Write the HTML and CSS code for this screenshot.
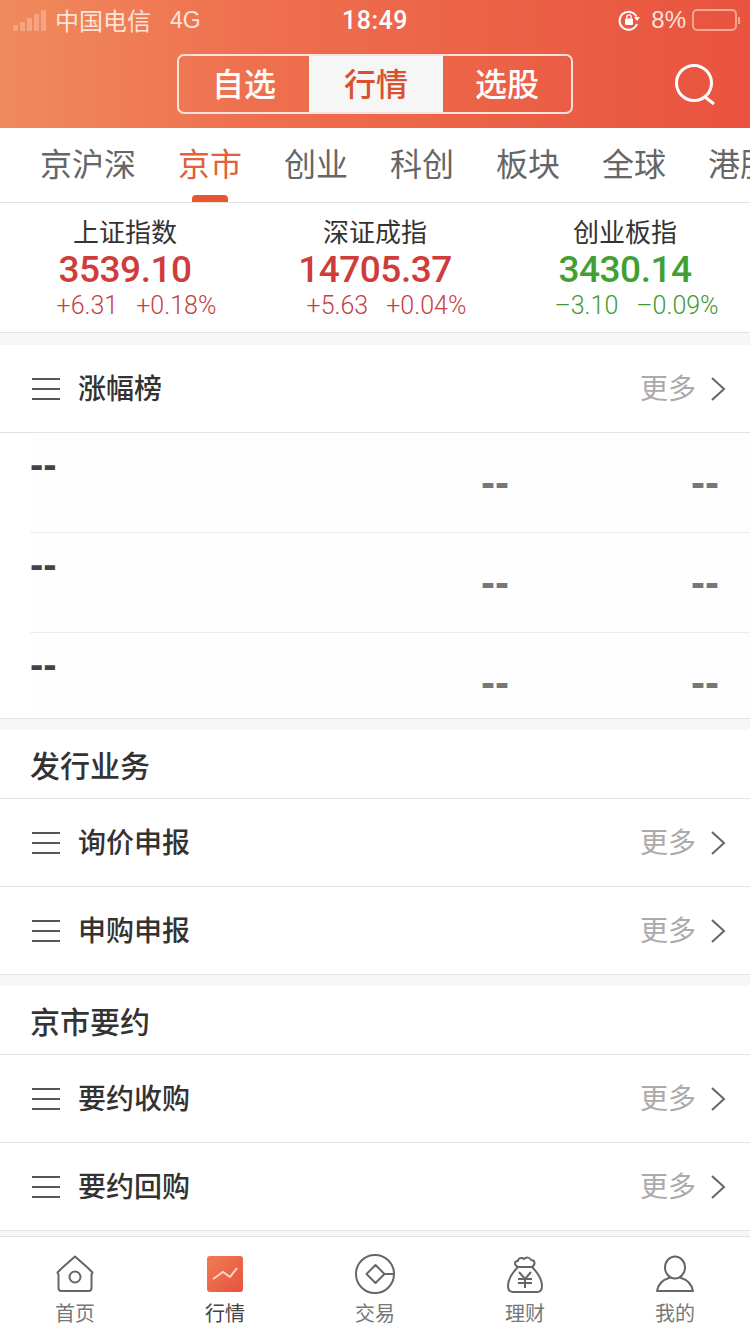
FILE: index.html
```html
<!DOCTYPE html>
<html lang="zh-CN">
<head>
  <meta charset="UTF-8">
  <meta name="viewport" content="width=device-width, initial-scale=1.0">
  <title>行情</title>
  <link rel="stylesheet" href="styles.css">
</head>
<body>
  <svg class="defs" width="0" height="0">
    <symbol id="menu" viewBox="0 0 30 24">
      <path d="M1 2h28M1 12h28M1 22h28" fill="none" stroke="#555" stroke-width="2"/>
    </symbol>
    <symbol id="arrow" viewBox="0 0 16 24">
      <path d="M2 1l12 11L2 23" fill="none" stroke="#666" stroke-width="2"/>
    </symbol>
  </svg>

  <header class="top">
    <div class="status">
      <div class="status-left">
        <span class="signal"><i></i><i></i><i></i><i></i><i></i></span>
        <span class="carrier">中国电信</span>
        <span class="net">4G</span>
      </div>
      <div class="clock">18:49</div>
      <div class="status-right">
        <svg class="lock" width="22" height="22" viewBox="0 0 22 22">
          <path d="M18.5 7.5A9 9 0 1 0 19 15" fill="none" stroke="#fff" stroke-width="2"/>
          <path d="M16 8h6l-3 4z" fill="#fff"/>
          <rect x="7" y="9.5" width="8" height="6.5" rx="1" fill="#fff"/>
          <path d="M8.800 9.500V8a2.200 2.200 0 0 1 4.400 0v1.500" fill="none" stroke="#fff" stroke-width="1.300"/>
        </svg>
        <span class="pct">8%</span>
        <span class="battery"></span>
        <span class="battery-tip"></span>
      </div>
    </div>
    <div class="nav">
      <div class="seg">
        <div class="seg-item">自选</div>
        <div class="seg-item active">行情</div>
        <div class="seg-item">选股</div>
      </div>
      <svg class="search" width="46" height="46" viewBox="0 0 46 46">
        <circle cx="22" cy="22" r="17.500" fill="none" stroke="#fff" stroke-width="3"/>
        <path d="M33 36l9 7" fill="none" stroke="#fff" stroke-width="3"/>
      </svg>
    </div>
  </header>

  <nav class="tabs">
    <span class="tab">京沪深</span>
    <span class="tab active">京市</span>
    <span class="tab">创业</span>
    <span class="tab">科创</span>
    <span class="tab">板块</span>
    <span class="tab">全球</span>
    <span class="tab">港股</span>
  </nav>

  <section class="indices">
    <div class="index up">
      <div class="index-name">上证指数</div>
      <div class="index-value">3539.10</div>
      <div class="index-change"><span>+6.31</span><span>+0.18%</span></div>
    </div>
    <div class="index up">
      <div class="index-name">深证成指</div>
      <div class="index-value">14705.37</div>
      <div class="index-change"><span>+5.63</span><span>+0.04%</span></div>
    </div>
    <div class="index down">
      <div class="index-name">创业板指</div>
      <div class="index-value">3430.14</div>
      <div class="index-change"><span>–3.10</span><span>–0.09%</span></div>
    </div>
  </section>

  <main class="content">
    <section class="block first">
      <div class="list-head tall">
        <svg class="menu" width="30" height="24"><use href="#menu"/></svg>
        <span class="list-title">涨幅榜</span>
        <span class="more">更多</span>
        <svg class="arrow" width="16" height="24"><use href="#arrow"/></svg>
      </div>
      <div class="stock"><span class="stock-name">--</span><span class="stock-num">--</span><span class="stock-num last">--</span></div>
      <div class="stock"><span class="stock-name">--</span><span class="stock-num">--</span><span class="stock-num last">--</span></div>
      <div class="stock end"><span class="stock-name">--</span><span class="stock-num">--</span><span class="stock-num last">--</span></div>
    </section>

    <section class="block">
      <h2 class="block-title">发行业务</h2>
      <div class="list-head">
        <svg class="menu" width="30" height="24"><use href="#menu"/></svg>
        <span class="list-title">询价申报</span>
        <span class="more">更多</span>
        <svg class="arrow" width="16" height="24"><use href="#arrow"/></svg>
      </div>
      <div class="list-head">
        <svg class="menu" width="30" height="24"><use href="#menu"/></svg>
        <span class="list-title">申购申报</span>
        <span class="more">更多</span>
        <svg class="arrow" width="16" height="24"><use href="#arrow"/></svg>
      </div>
    </section>

    <section class="block">
      <h2 class="block-title">京市要约</h2>
      <div class="list-head">
        <svg class="menu" width="30" height="24"><use href="#menu"/></svg>
        <span class="list-title">要约收购</span>
        <span class="more">更多</span>
        <svg class="arrow" width="16" height="24"><use href="#arrow"/></svg>
      </div>
      <div class="list-head">
        <svg class="menu" width="30" height="24"><use href="#menu"/></svg>
        <span class="list-title">要约回购</span>
        <span class="more">更多</span>
        <svg class="arrow" width="16" height="24"><use href="#arrow"/></svg>
      </div>
    </section>
  </main>

  <footer class="tabbar">
    <div class="bar-item">
      <svg width="44" height="44" viewBox="0 0 44 44">
        <path d="M22 2.500L9 14l-4.500 4.500 1 2V34a3 3 0 0 0 3 3h27a3 3 0 0 0 3-3V20.500l1-2L35 14z" fill="none" stroke="#666" stroke-width="2" stroke-linejoin="round"/>
        <circle cx="22" cy="23" r="5.500" fill="none" stroke="#666" stroke-width="2"/>
      </svg>
      <span>首页</span>
    </div>
    <div class="bar-item active">
      <svg width="44" height="44" viewBox="0 0 44 44">
        <defs>
          <linearGradient id="chartbg" x1="0" y1="0" x2="1" y2="1">
            <stop offset="0" stop-color="#ee7d55"/>
            <stop offset="1" stop-color="#e8523e"/>
          </linearGradient>
        </defs>
        <rect x="4" y="2" width="36" height="36" rx="3" fill="url(#chartbg)"/>
        <path d="M10 25l10-7 7 5 7-9" fill="none" stroke="#fbd5c8" stroke-width="2"/>
      </svg>
      <span>行情</span>
    </div>
    <div class="bar-item">
      <svg width="44" height="44" viewBox="0 0 44 44">
        <circle cx="22" cy="20" r="19" fill="none" stroke="#666" stroke-width="2"/>
        <path d="M22.500 11l9 9-9 9-9-9zM31.500 20H41" fill="none" stroke="#666" stroke-width="2" stroke-linejoin="round"/>
      </svg>
      <span>交易</span>
    </div>
    <div class="bar-item">
      <svg width="44" height="44" viewBox="0 0 44 44">
        <path d="M15 13C11 11 11 7 15 7C15 4 19 3 21 5C23 3 27 3 28 6C32 6 33 10 29 13Z" fill="none" stroke="#666" stroke-width="2" stroke-linejoin="round"/>
        <path d="M15 13C10 18 5 25 5 32C5 36 7 38 10 38H34C37 38 39 36 39 32C39 25 34 18 29 13" fill="none" stroke="#666" stroke-width="2"/>
        <path d="M16 18l6 7 6-7M15 25h14M15 29h14M22 25v9" fill="none" stroke="#666" stroke-width="2"/>
      </svg>
      <span>理财</span>
    </div>
    <div class="bar-item">
      <svg width="44" height="44" viewBox="0 0 44 44">
        <ellipse cx="22" cy="13.500" rx="10" ry="11" fill="none" stroke="#666" stroke-width="2"/>
        <path d="M17 23.500C9 26 5 31 4 37H40C39 31 35 26 27 23.500" fill="none" stroke="#666" stroke-width="2" stroke-linejoin="round"/>
      </svg>
      <span>我的</span>
    </div>
  </footer>
</body>
</html>
```

FILE: styles.css
```css
* {
  box-sizing: border-box;
}

html, body {
  margin: 0;
  padding: 0;
}

body {
  width: 750px;
  height: 1334px;
  overflow: hidden;
  background-color: #f7f7f7;
  font-family: "Noto Sans CJK SC", "Noto Sans", sans-serif;
  color: #333;
}

.defs {
  display: block;
  height: 0;
}

/* header */
.top {
  height: 128px;
  background: linear-gradient(90deg, #f08a5c 0%, #ee6f4e 35%, #e9533f 100%);
  color: #fff;
}

.status {
  height: 42px;
  display: flex;
  align-items: center;
  justify-content: space-between;
  padding: 0 10px 2px 13px;
  position: relative;
}

.status-left, .status-right {
  display: flex;
  align-items: center;
}

.signal {
  display: flex;
  align-items: flex-end;
  gap: 2px;
  width: 33px;
  height: 21px;
}

.signal i {
  width: 5px;
  background-color: rgba(255, 255, 255, 0.25);
  border-radius: 1px;
}

.signal i:nth-child(1) { height: 6px; }
.signal i:nth-child(2) { height: 9px; }
.signal i:nth-child(3) { height: 13px; }
.signal i:nth-child(4) { height: 17px; }
.signal i:nth-child(5) { height: 21px; }

.carrier {
  margin-left: 9px;
  font-size: 24px;
  line-height: 30px;
  color: #fbe3d8;
}

.net {
  margin-left: 19px;
  font-family: "Liberation Sans", sans-serif;
  font-size: 23px;
  color: #fbe3d8;
}

.clock {
  position: absolute;
  left: 0;
  right: 0;
  text-align: center;
  font-family: Roboto, sans-serif;
  font-size: 25px;
  font-weight: 500;
  letter-spacing: 0.5px;
  pointer-events: none;
}

.lock {
  margin-right: 11px;
}

.pct {
  font-family: "Liberation Sans", sans-serif;
  font-size: 24px;
  color: #fbe3d8;
  margin-right: 6px;
}

.battery {
  width: 45px;
  height: 22px;
  border: 2px solid #f7a58f;
  border-radius: 5px;
}

.battery-tip {
  width: 2px;
  height: 7px;
  margin-left: 1px;
  background-color: #f7a58f;
}

.nav {
  height: 86px;
  display: flex;
  justify-content: center;
  padding-top: 12px;
  position: relative;
}

.seg {
  width: 396px;
  height: 60px;
  display: flex;
  border: 2px solid #fbe3dc;
  border-radius: 7px;
  overflow: hidden;
}

.seg-item {
  flex: 1;
  text-align: center;
  font-size: 32px;
  line-height: 52px;
  font-weight: 500;
}

.seg-item:first-child {
  flex: 0 0 130px;
}

.seg-item.active {
  flex: 0 0 134px;
  background-color: #f6f6f6;
  color: #d9512f;
}

.search {
  position: absolute;
  right: 32px;
  top: 19px;
}

/* tabs */
.tabs {
  height: 75px;
  display: flex;
  background-color: #fff;
  border-bottom: 1px solid #e3e3e3;
  white-space: nowrap;
  overflow: hidden;
  padding-left: 40px;
  gap: 42px;
}

.tab {
  position: relative;
  font-size: 32px;
  line-height: 69px;
  color: #666;
  flex-shrink: 0;
}

.tab.active {
  color: #e2603a;
}

.tab.active::after {
  content: "";
  position: absolute;
  left: 14px;
  top: 67px;
  width: 36px;
  height: 7px;
  background-color: #e8562f;
  border-radius: 4px 4px 0 0;
}

/* indices */
.indices {
  height: 130px;
  display: flex;
  background-color: #fff;
  border-bottom: 1px solid #e3e3e3;
}

.index {
  flex: 1;
  text-align: center;
  padding-top: 10px;
}

.index-name {
  font-size: 26px;
  line-height: 36px;
  color: #333;
}

.index-value {
  margin: 2px 0 -2px;
  font-family: Roboto, sans-serif;
  font-size: 37px;
  line-height: 38px;
  font-weight: 500;
  letter-spacing: -0.5px;
}

.index-change {
  display: flex;
  justify-content: center;
  gap: 18px;
  padding-left: 23px;
  font-family: Roboto, sans-serif;
  font-size: 25px;
  line-height: 37px;
  font-weight: 300;
}

.up .index-value { color: #cf3c3a; }
.up .index-change { color: #c63f42; }
.down .index-value { color: #42a032; }
.down .index-change { color: #3f9a32; }

/* lists */
.content {
  padding-top: 12px;
}

.block {
  background-color: #fff;
  border-bottom: 1px solid #e3e3e3;
  margin-bottom: 11px;
}

.block-title {
  margin: 0;
  height: 69px;
  padding-left: 30px;
  font-size: 30px;
  font-weight: 500;
  line-height: 68px;
  color: #333;
  border-bottom: 1px solid #e3e3e3;
}

.list-head {
  height: 88px;
  display: flex;
  align-items: center;
  padding: 0 24px 0 31px;
  border-bottom: 1px solid #e3e3e3;
}

.block > .list-head:last-child {
  border-bottom: none;
  height: 87px;
}

.list-head.tall {
  height: 88px;
}

.menu {
  flex-shrink: 0;
}

.list-title {
  flex: 1;
  margin-left: 17px;
  padding-bottom: 3px;
  font-size: 28px;
  font-weight: 500;
  color: #333;
}

.more {
  padding-bottom: 3px;
  font-size: 28px;
  color: #aaa;
}

.arrow {
  margin-left: 14px;
}

.stock {
  height: 100px;
  display: flex;
  margin-left: 30px;
  border-bottom: 1px solid #ececec;
  background-color: #fefefe;
  font-family: "Liberation Sans", sans-serif;
  font-weight: 700;
}

.stock.end {
  height: 85px;
  border-bottom: none;
}

.stock-name {
  flex: 1;
  padding-top: 13px;
  font-size: 40px;
  line-height: 36px;
  color: #444;
}

.stock-num {
  width: 210px;
  padding-top: 32px;
  font-size: 42px;
  line-height: 36px;
  color: #777;
  text-align: right;
  padding-right: 31px;
}

/* bottom bar */
.tabbar {
  position: absolute;
  left: 0;
  top: 1236px;
  width: 750px;
  height: 98px;
  display: flex;
  background-color: #fff;
  border-top: 1px solid #e3e3e3;
}

.bar-item {
  flex: 1;
  display: flex;
  flex-direction: column;
  align-items: center;
  padding-top: 17px;
  font-size: 20px;
  color: #777;
}

.bar-item span {
  line-height: 30px;
}

.bar-item.active {
  color: #444;
}
```
